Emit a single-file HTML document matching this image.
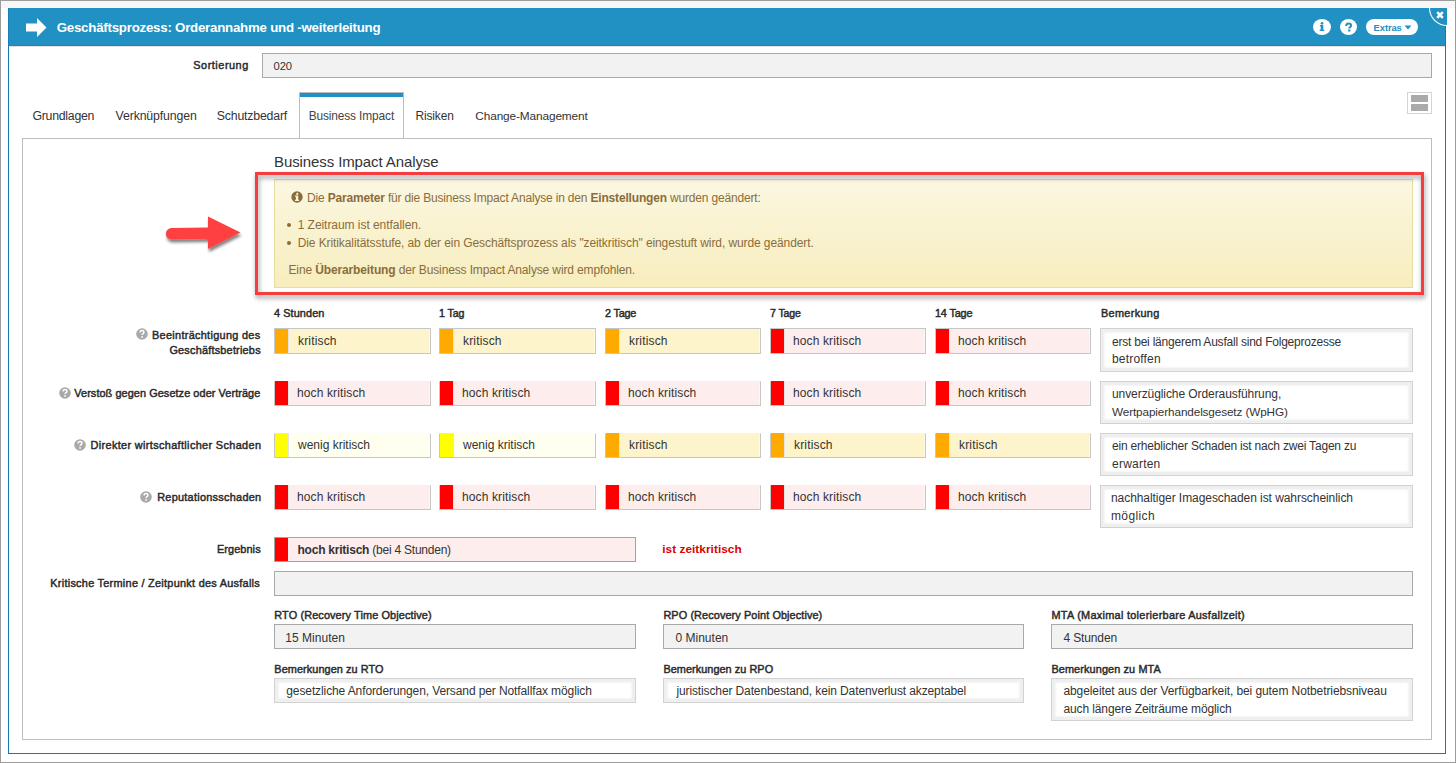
<!DOCTYPE html>
<html><head><meta charset="utf-8"><style>
html,body{margin:0;padding:0;}
body{width:1456px;height:763px;overflow:hidden;position:relative;background:#fff;font-family:"Liberation Sans",sans-serif;}
body>div,body>svg{position:absolute;box-sizing:content-box;}
.t{white-space:nowrap;}
</style></head><body>
<div style="left:0px;top:0px;width:1456px;height:1px;background:#9c9c9c"></div>
<div style="left:0px;top:762px;width:1456px;height:1px;background:#9c9c9c"></div>
<div style="left:0px;top:0px;width:1px;height:763px;background:#9c9c9c"></div>
<div style="left:1455px;top:0px;width:1px;height:763px;background:#9c9c9c"></div>
<div style="left:1px;top:1px;width:1454px;height:7px;background:#f7f7f7"></div>
<div style="left:8px;top:8px;width:1436px;height:744px;border:1px solid #1878ab;background:#fff"></div>
<div style="left:8px;top:8px;width:1438px;height:38px;background:#2190c2"></div>
<div style="left:8px;top:8px;width:1px;height:38px;background:#1a7fb3"></div>
<div style="left:8px;top:45px;width:1438px;height:1px;background:#1c86bb"></div>
<div style="left:9px;top:46px;width:1436px;height:1px;background:#e6e2e0"></div>
<svg style="left:25px;top:17px" width="23" height="21" viewBox="0 0 23 21"><path d="M1 6.5 H12 V1 L21.5 10.5 L12 20 V14.5 H1 Z" fill="#fff"/></svg>
<div class="t" style="left:56.700px;top:21px;font-size:13.3px;line-height:13.3px;font-weight:bold;color:#fff;letter-spacing:-0.240px;">Geschäftsprozess: Orderannahme und -weiterleitung</div>
<div style="left:1313px;top:19px;width:18px;height:16px;background:#fff;border-radius:50%"></div>
<svg style="left:1313px;top:19px" width="18" height="16" viewBox="0 0 18 16"><circle cx="9" cy="4.3" r="1.35" fill="#2190c2"/><path d="M7 6 H10.3 V10.8 H11.3 V12 H6.7 V10.8 H7.7 V7.2 H7 Z" fill="#2190c2"/></svg>
<div style="left:1340px;top:19px;width:17px;height:16px;background:#fff;border-radius:50%"></div>
<svg style="left:1340px;top:19px" width="17" height="16" viewBox="0 0 17 16"><path d="M6.2 7 Q6.0 4.6 8.6 4.6 Q11.1 4.6 11.1 6.6 Q11.1 7.8 9.9 8.4 Q9.3 8.8 9.3 9.6" stroke="#2190c2" stroke-width="2" fill="none"/><rect x="8.1" y="10.5" width="2.3" height="2" fill="#2190c2"/></svg>
<div style="left:1366px;top:19px;width:52px;height:16px;background:#fff;border-radius:8px"></div>
<div class="t" style="left:1373.600px;top:23px;font-size:9.44px;line-height:9.44px;font-weight:bold;color:#2190c2;letter-spacing:-0.120px;">Extras</div>
<svg style="left:1404px;top:25px" width="8" height="5" viewBox="0 0 8 5"><path d="M0.5 0.5 H7.5 L4 4.5 Z" fill="#2190c2"/></svg>
<div style="left:1429px;top:8px;width:17px;height:17px;background:#2190c2;border-left:1px solid #fff;border-bottom:1px solid #fff;border-bottom-left-radius:18px"></div>
<svg style="left:1436px;top:11px" width="8" height="8" viewBox="0 0 8 8"><path d="M1.2 1.2 L6.8 6.8 M6.8 1.2 L1.2 6.8" stroke="#fff" stroke-width="2.6" stroke-linecap="butt"/></svg>
<div style="left:1445px;top:26px;width:1px;height:20px;background:#1878ab"></div>
<div class="t" style="right:1207.228px;text-align:right;top:60px;font-size:10.9px;line-height:10.9px;font-weight:normal;color:#2a2a2a;-webkit-text-stroke:0.45px #2a2a2a;letter-spacing:0.522px;">Sortierung</div>
<div style="left:262px;top:53px;width:1168px;height:23px;background:#f2f2f2;border:1px solid #a9a9a9"></div>
<div class="t" style="left:273.600px;top:61px;font-size:11.24px;line-height:11.24px;font-weight:normal;color:#333;letter-spacing:-0.120px;">020</div>
<div style="left:1407px;top:92px;width:23px;height:20px;border:1px solid #d4d4d4;background:#fff"></div>
<div style="left:1411px;top:95px;width:17px;height:7px;background:#aaa"></div>
<div style="left:1411px;top:104px;width:17px;height:7px;background:#aaa"></div>
<div class="t" style="left:32.400px;top:110px;font-size:12.3px;line-height:12.3px;font-weight:normal;color:#333;letter-spacing:-0.244px;">Grundlagen</div>
<div class="t" style="left:115.600px;top:110px;font-size:12.3px;line-height:12.3px;font-weight:normal;color:#333;letter-spacing:-0.133px;">Verknüpfungen</div>
<div class="t" style="left:216.800px;top:110px;font-size:12.3px;line-height:12.3px;font-weight:normal;color:#333;letter-spacing:-0.182px;">Schutzbedarf</div>
<div style="left:299px;top:92px;width:103px;height:46px;border:1px solid #bdbdbd;border-bottom:none;background:#fff"></div>
<div style="left:300px;top:93px;width:103px;height:4px;background:#2190c2"></div>
<div class="t" style="left:308.633px;top:111px;font-size:11.9px;line-height:11.9px;font-weight:normal;color:#444;letter-spacing:-0.120px;">Business Impact</div>
<div class="t" style="left:415.430px;top:111px;font-size:11.93px;line-height:11.93px;font-weight:normal;color:#333;letter-spacing:-0.120px;">Risiken</div>
<div class="t" style="left:475.300px;top:111px;font-size:11.83px;line-height:11.83px;font-weight:normal;color:#333;letter-spacing:-0.120px;">Change-Management</div>
<div style="left:22px;top:138px;width:1408px;height:600px;border:1px solid #bdbdbd;background:transparent"></div>
<div class="t" style="left:274.000px;top:154px;font-size:15px;line-height:15px;font-weight:normal;color:#333;letter-spacing:-0.100px;">Business Impact Analyse</div>
<div style="left:274px;top:179px;width:1137px;height:107px;border:1px solid #e8dca0;background:linear-gradient(#fbf7e1,#f7edbd)"></div>
<div style="left:255px;top:172px;width:1163px;height:117px;border:3px solid #f73c40;filter:drop-shadow(1px 3px 2.5px rgba(0,0,0,0.42))"></div>
<svg style="left:291px;top:191.2px" width="12" height="12" viewBox="0 0 12 12"><circle cx="6" cy="6" r="5.7" fill="#8a6d3b"/><circle cx="6.3" cy="2.9" r="1.1" fill="#fbf6df"/><path d="M4.1 4.6 H7.2 V8.7 H8.1 V10 H4 V8.7 H4.9 V5.8 H4.1 Z" fill="#fbf6df"/></svg>
<div class="t" style="left:307.000px;top:192px;font-size:12px;line-height:12px;font-weight:normal;color:#8a6d3b;letter-spacing:-0.177px;">Die <b>Parameter</b> für die Business Impact Analyse in den <b>Einstellungen</b> wurden geändert:</div>
<div style="left:287px;top:222.5px;width:4px;height:4px;border-radius:50%;background:#8a6d3b"></div>
<div style="left:287px;top:241px;width:4px;height:4px;border-radius:50%;background:#8a6d3b"></div>
<div class="t" style="left:297.700px;top:219px;font-size:12px;line-height:12px;font-weight:normal;color:#8a6d3b;letter-spacing:-0.050px;">1 Zeitraum ist entfallen.</div>
<div class="t" style="left:297.700px;top:237px;font-size:12px;line-height:12px;font-weight:normal;color:#8a6d3b;letter-spacing:-0.091px;">Die Kritikalitätsstufe, ab der ein Geschäftsprozess als "zeitkritisch" eingestuft wird, wurde geändert.</div>
<div class="t" style="left:288.500px;top:264px;font-size:12px;line-height:12px;font-weight:normal;color:#8a6d3b;letter-spacing:-0.133px;">Eine <b>Überarbeitung</b> der Business Impact Analyse wird empfohlen.</div>
<svg style="left:160px;top:210px" width="90" height="50" viewBox="0 0 90 50"><defs><filter id="sh" x="-20%" y="-20%" width="140%" height="160%"><feGaussianBlur in="SourceAlpha" stdDeviation="1.8"/><feOffset dx="1" dy="3"/><feComponentTransfer><feFuncA type="linear" slope="0.5"/></feComponentTransfer><feMerge><feMergeNode/><feMergeNode in="SourceGraphic"/></feMerge></filter></defs><g filter="url(#sh)"><path d="M11.5 18 L48 17.6 L48 6.5 L80.5 22.6 L48 39 L48 29 L11.5 29.4 A5.5 5.5 0 0 1 11.5 18 Z" fill="#ff4141"/></g></svg>
<div class="t" style="left:274.000px;top:308px;font-size:10.9px;line-height:10.9px;font-weight:normal;color:#2a2a2a;-webkit-text-stroke:0.45px #2a2a2a;letter-spacing:0.088px;">4 Stunden</div>
<div class="t" style="left:439.000px;top:308px;font-size:10.65px;line-height:10.65px;font-weight:normal;color:#2a2a2a;-webkit-text-stroke:0.45px #2a2a2a;letter-spacing:-0.120px;">1 Tag</div>
<div class="t" style="left:605.000px;top:308px;font-size:10.9px;line-height:10.9px;font-weight:normal;color:#2a2a2a;-webkit-text-stroke:0.45px #2a2a2a;letter-spacing:-0.220px;">2 Tage</div>
<div class="t" style="left:770.000px;top:308px;font-size:10.57px;line-height:10.57px;font-weight:normal;color:#2a2a2a;-webkit-text-stroke:0.45px #2a2a2a;letter-spacing:-0.120px;">7 Tage</div>
<div class="t" style="left:935.000px;top:308px;font-size:10.9px;line-height:10.9px;font-weight:normal;color:#2a2a2a;-webkit-text-stroke:0.45px #2a2a2a;letter-spacing:-0.183px;">14 Tage</div>
<div class="t" style="left:1101.000px;top:308px;font-size:10.9px;line-height:10.9px;font-weight:normal;color:#2a2a2a;-webkit-text-stroke:0.45px #2a2a2a;letter-spacing:0.325px;">Bemerkung</div>
<div style="left:274px;top:328px;width:155px;height:24px;border:1px solid #c6c6c6;background:#fdf4cc;box-shadow:inset -1px 0 0 rgba(255,255,255,0.5)"></div>
<div style="left:275px;top:329px;width:13px;height:24px;background:#ffaa00"></div>
<div style="left:288px;top:329px;width:1px;height:24px;background:#e4e4e4"></div>
<div class="t" style="left:298.000px;top:335px;font-size:12px;line-height:12px;font-weight:normal;color:#333;letter-spacing:0.171px;">kritisch</div>
<div style="left:439px;top:328px;width:155px;height:24px;border:1px solid #c6c6c6;background:#fdf4cc;box-shadow:inset -1px 0 0 rgba(255,255,255,0.5)"></div>
<div style="left:440px;top:329px;width:13px;height:24px;background:#ffaa00"></div>
<div style="left:453px;top:329px;width:1px;height:24px;background:#e4e4e4"></div>
<div class="t" style="left:463.000px;top:335px;font-size:12px;line-height:12px;font-weight:normal;color:#333;letter-spacing:0.171px;">kritisch</div>
<div style="left:605px;top:328px;width:154px;height:24px;border:1px solid #c6c6c6;background:#fdf4cc;box-shadow:inset -1px 0 0 rgba(255,255,255,0.5)"></div>
<div style="left:606px;top:329px;width:13px;height:24px;background:#ffaa00"></div>
<div style="left:619px;top:329px;width:1px;height:24px;background:#e4e4e4"></div>
<div class="t" style="left:629.000px;top:335px;font-size:12px;line-height:12px;font-weight:normal;color:#333;letter-spacing:0.171px;">kritisch</div>
<div style="left:770px;top:328px;width:154px;height:24px;border:1px solid #c6c6c6;background:#fdeded;box-shadow:inset -1px 0 0 rgba(255,255,255,0.5)"></div>
<div style="left:771px;top:329px;width:13px;height:24px;background:#ff0000"></div>
<div style="left:784px;top:329px;width:1px;height:24px;background:#e4e4e4"></div>
<div class="t" style="left:793.000px;top:335px;font-size:12px;line-height:12px;font-weight:normal;color:#333;letter-spacing:0.125px;">hoch kritisch</div>
<div style="left:935px;top:328px;width:154px;height:24px;border:1px solid #c6c6c6;background:#fdeded;box-shadow:inset -1px 0 0 rgba(255,255,255,0.5)"></div>
<div style="left:936px;top:329px;width:13px;height:24px;background:#ff0000"></div>
<div style="left:949px;top:329px;width:1px;height:24px;background:#e4e4e4"></div>
<div class="t" style="left:958.000px;top:335px;font-size:12px;line-height:12px;font-weight:normal;color:#333;letter-spacing:0.125px;">hoch kritisch</div>
<div class="t" style="right:1195.567px;text-align:right;top:330px;font-size:10.9px;line-height:10.9px;font-weight:normal;color:#2a2a2a;-webkit-text-stroke:0.45px #2a2a2a;letter-spacing:0.305px;">Beeinträchtigung des</div>
<div class="t" style="right:1195.206px;text-align:right;top:345px;font-size:10.9px;line-height:10.9px;font-weight:normal;color:#2a2a2a;-webkit-text-stroke:0.45px #2a2a2a;letter-spacing:0.213px;">Geschäftsbetriebs</div>
<div style="left:1100px;top:328px;width:311px;height:42px;border:1px solid #d2d2d2;background:#fff;box-shadow:inset 0 0 0 3px #efefef, inset 0 0 2px 4px #f4f4f4"></div>
<div class="t" style="left:1112.000px;top:336px;font-size:12px;line-height:12px;font-weight:normal;color:#333;letter-spacing:-0.223px;">erst bei längerem Ausfall sind Folgeprozesse</div>
<div class="t" style="left:1112.000px;top:353px;font-size:12px;line-height:12px;font-weight:normal;color:#333;letter-spacing:0.175px;">betroffen</div>
<div style="left:274px;top:381px;width:155px;height:23px;border:1px solid #c6c6c6;border-top-color:transparent;background:#fdeded;box-shadow:inset -1px 0 0 rgba(255,255,255,0.5)"></div>
<div style="left:275px;top:381px;width:13px;height:24px;background:#ff0000"></div>
<div style="left:288px;top:381px;width:1px;height:24px;background:#e4e4e4"></div>
<div class="t" style="left:297.000px;top:387px;font-size:12px;line-height:12px;font-weight:normal;color:#333;letter-spacing:0.125px;">hoch kritisch</div>
<div style="left:439px;top:381px;width:155px;height:23px;border:1px solid #c6c6c6;border-top-color:transparent;background:#fdeded;box-shadow:inset -1px 0 0 rgba(255,255,255,0.5)"></div>
<div style="left:440px;top:381px;width:13px;height:24px;background:#ff0000"></div>
<div style="left:453px;top:381px;width:1px;height:24px;background:#e4e4e4"></div>
<div class="t" style="left:462.000px;top:387px;font-size:12px;line-height:12px;font-weight:normal;color:#333;letter-spacing:0.125px;">hoch kritisch</div>
<div style="left:605px;top:381px;width:154px;height:23px;border:1px solid #c6c6c6;border-top-color:transparent;background:#fdeded;box-shadow:inset -1px 0 0 rgba(255,255,255,0.5)"></div>
<div style="left:606px;top:381px;width:13px;height:24px;background:#ff0000"></div>
<div style="left:619px;top:381px;width:1px;height:24px;background:#e4e4e4"></div>
<div class="t" style="left:628.000px;top:387px;font-size:12px;line-height:12px;font-weight:normal;color:#333;letter-spacing:0.125px;">hoch kritisch</div>
<div style="left:770px;top:381px;width:154px;height:23px;border:1px solid #c6c6c6;border-top-color:transparent;background:#fdeded;box-shadow:inset -1px 0 0 rgba(255,255,255,0.5)"></div>
<div style="left:771px;top:381px;width:13px;height:24px;background:#ff0000"></div>
<div style="left:784px;top:381px;width:1px;height:24px;background:#e4e4e4"></div>
<div class="t" style="left:793.000px;top:387px;font-size:12px;line-height:12px;font-weight:normal;color:#333;letter-spacing:0.125px;">hoch kritisch</div>
<div style="left:935px;top:381px;width:154px;height:23px;border:1px solid #c6c6c6;border-top-color:transparent;background:#fdeded;box-shadow:inset -1px 0 0 rgba(255,255,255,0.5)"></div>
<div style="left:936px;top:381px;width:13px;height:24px;background:#ff0000"></div>
<div style="left:949px;top:381px;width:1px;height:24px;background:#e4e4e4"></div>
<div class="t" style="left:958.000px;top:387px;font-size:12px;line-height:12px;font-weight:normal;color:#333;letter-spacing:0.125px;">hoch kritisch</div>
<div class="t" style="right:1195.673px;text-align:right;top:388px;font-size:10.9px;line-height:10.9px;font-weight:normal;color:#2a2a2a;-webkit-text-stroke:0.45px #2a2a2a;letter-spacing:0.074px;">Verstoß gegen Gesetze oder Verträge</div>
<div style="left:1100px;top:381px;width:311px;height:41px;border:1px solid #d2d2d2;background:#fff;box-shadow:inset 0 0 0 3px #efefef, inset 0 0 2px 4px #f4f4f4"></div>
<div class="t" style="left:1112.000px;top:388px;font-size:12px;line-height:12px;font-weight:normal;color:#333;letter-spacing:-0.076px;">unverzügliche Orderausführung,</div>
<div class="t" style="left:1112.000px;top:406px;font-size:11.75px;line-height:11.75px;font-weight:normal;color:#333;letter-spacing:-0.120px;">Wertpapierhandelsgesetz (WpHG)</div>
<div style="left:274px;top:433px;width:155px;height:23px;border:1px solid #c6c6c6;border-top-color:transparent;background:#fffff0;box-shadow:inset -1px 0 0 rgba(255,255,255,0.5)"></div>
<div style="left:275px;top:433px;width:13px;height:24px;background:#ffff00"></div>
<div style="left:288px;top:433px;width:1px;height:24px;background:#e4e4e4"></div>
<div class="t" style="left:298.000px;top:439px;font-size:12px;line-height:12px;font-weight:normal;color:#333;letter-spacing:0.000px;">wenig kritisch</div>
<div style="left:439px;top:433px;width:155px;height:23px;border:1px solid #c6c6c6;border-top-color:transparent;background:#fffff0;box-shadow:inset -1px 0 0 rgba(255,255,255,0.5)"></div>
<div style="left:440px;top:433px;width:13px;height:24px;background:#ffff00"></div>
<div style="left:453px;top:433px;width:1px;height:24px;background:#e4e4e4"></div>
<div class="t" style="left:463.000px;top:439px;font-size:12px;line-height:12px;font-weight:normal;color:#333;letter-spacing:0.000px;">wenig kritisch</div>
<div style="left:605px;top:433px;width:154px;height:23px;border:1px solid #c6c6c6;border-top-color:transparent;background:#fdf4cc;box-shadow:inset -1px 0 0 rgba(255,255,255,0.5)"></div>
<div style="left:606px;top:433px;width:13px;height:24px;background:#ffaa00"></div>
<div style="left:619px;top:433px;width:1px;height:24px;background:#e4e4e4"></div>
<div class="t" style="left:629.000px;top:439px;font-size:12px;line-height:12px;font-weight:normal;color:#333;letter-spacing:0.171px;">kritisch</div>
<div style="left:770px;top:433px;width:154px;height:23px;border:1px solid #c6c6c6;border-top-color:transparent;background:#fdf4cc;box-shadow:inset -1px 0 0 rgba(255,255,255,0.5)"></div>
<div style="left:771px;top:433px;width:13px;height:24px;background:#ffaa00"></div>
<div style="left:784px;top:433px;width:1px;height:24px;background:#e4e4e4"></div>
<div class="t" style="left:794.000px;top:439px;font-size:12px;line-height:12px;font-weight:normal;color:#333;letter-spacing:0.171px;">kritisch</div>
<div style="left:935px;top:433px;width:154px;height:23px;border:1px solid #c6c6c6;border-top-color:transparent;background:#fdf4cc;box-shadow:inset -1px 0 0 rgba(255,255,255,0.5)"></div>
<div style="left:936px;top:433px;width:13px;height:24px;background:#ffaa00"></div>
<div style="left:949px;top:433px;width:1px;height:24px;background:#e4e4e4"></div>
<div class="t" style="left:959.000px;top:439px;font-size:12px;line-height:12px;font-weight:normal;color:#333;letter-spacing:0.171px;">kritisch</div>
<div class="t" style="right:1194.659px;text-align:right;top:440px;font-size:10.9px;line-height:10.9px;font-weight:normal;color:#2a2a2a;-webkit-text-stroke:0.45px #2a2a2a;letter-spacing:0.353px;">Direkter wirtschaftlicher Schaden</div>
<div style="left:1100px;top:433px;width:311px;height:41px;border:1px solid #d2d2d2;background:#fff;box-shadow:inset 0 0 0 3px #efefef, inset 0 0 2px 4px #f4f4f4"></div>
<div class="t" style="left:1112.000px;top:440px;font-size:12px;line-height:12px;font-weight:normal;color:#333;letter-spacing:-0.196px;">ein erheblicher Schaden ist nach zwei Tagen zu</div>
<div class="t" style="left:1112.000px;top:458px;font-size:12px;line-height:12px;font-weight:normal;color:#333;letter-spacing:0.229px;">erwarten</div>
<div style="left:274px;top:485px;width:155px;height:23px;border:1px solid #c6c6c6;border-top-color:transparent;background:#fdeded;box-shadow:inset -1px 0 0 rgba(255,255,255,0.5)"></div>
<div style="left:275px;top:485px;width:13px;height:24px;background:#ff0000"></div>
<div style="left:288px;top:485px;width:1px;height:24px;background:#e4e4e4"></div>
<div class="t" style="left:297.000px;top:491px;font-size:12px;line-height:12px;font-weight:normal;color:#333;letter-spacing:0.125px;">hoch kritisch</div>
<div style="left:439px;top:485px;width:155px;height:23px;border:1px solid #c6c6c6;border-top-color:transparent;background:#fdeded;box-shadow:inset -1px 0 0 rgba(255,255,255,0.5)"></div>
<div style="left:440px;top:485px;width:13px;height:24px;background:#ff0000"></div>
<div style="left:453px;top:485px;width:1px;height:24px;background:#e4e4e4"></div>
<div class="t" style="left:462.000px;top:491px;font-size:12px;line-height:12px;font-weight:normal;color:#333;letter-spacing:0.125px;">hoch kritisch</div>
<div style="left:605px;top:485px;width:154px;height:23px;border:1px solid #c6c6c6;border-top-color:transparent;background:#fdeded;box-shadow:inset -1px 0 0 rgba(255,255,255,0.5)"></div>
<div style="left:606px;top:485px;width:13px;height:24px;background:#ff0000"></div>
<div style="left:619px;top:485px;width:1px;height:24px;background:#e4e4e4"></div>
<div class="t" style="left:628.000px;top:491px;font-size:12px;line-height:12px;font-weight:normal;color:#333;letter-spacing:0.125px;">hoch kritisch</div>
<div style="left:770px;top:485px;width:154px;height:23px;border:1px solid #c6c6c6;border-top-color:transparent;background:#fdeded;box-shadow:inset -1px 0 0 rgba(255,255,255,0.5)"></div>
<div style="left:771px;top:485px;width:13px;height:24px;background:#ff0000"></div>
<div style="left:784px;top:485px;width:1px;height:24px;background:#e4e4e4"></div>
<div class="t" style="left:793.000px;top:491px;font-size:12px;line-height:12px;font-weight:normal;color:#333;letter-spacing:0.125px;">hoch kritisch</div>
<div style="left:935px;top:485px;width:154px;height:23px;border:1px solid #c6c6c6;border-top-color:transparent;background:#fdeded;box-shadow:inset -1px 0 0 rgba(255,255,255,0.5)"></div>
<div style="left:936px;top:485px;width:13px;height:24px;background:#ff0000"></div>
<div style="left:949px;top:485px;width:1px;height:24px;background:#e4e4e4"></div>
<div class="t" style="left:958.000px;top:491px;font-size:12px;line-height:12px;font-weight:normal;color:#333;letter-spacing:0.125px;">hoch kritisch</div>
<div class="t" style="right:1194.617px;text-align:right;top:492px;font-size:10.9px;line-height:10.9px;font-weight:normal;color:#2a2a2a;-webkit-text-stroke:0.45px #2a2a2a;letter-spacing:0.271px;">Reputationsschaden</div>
<div style="left:1100px;top:485px;width:311px;height:41px;border:1px solid #d2d2d2;background:#fff;box-shadow:inset 0 0 0 3px #efefef, inset 0 0 2px 4px #f4f4f4"></div>
<div class="t" style="left:1111.000px;top:492px;font-size:12px;line-height:12px;font-weight:normal;color:#333;letter-spacing:-0.065px;">nachhaltiger Imageschaden ist wahrscheinlich</div>
<div class="t" style="left:1111.000px;top:510px;font-size:12px;line-height:12px;font-weight:normal;color:#333;letter-spacing:0.367px;">möglich</div>
<svg style="left:136px;top:328.3px" width="12" height="12" viewBox="0 0 12 12"><circle cx="6" cy="6" r="5.8" fill="#a9a9a9"/><path d="M4.1 4.6 Q4.1 2.6 6 2.6 Q7.9 2.6 7.9 4.3 Q7.9 5.3 6.9 5.8 Q6.1 6.2 6.1 7.1" stroke="#fff" stroke-width="1.5" fill="none"/><rect x="5.25" y="8.1" width="1.6" height="1.6" fill="#fff"/></svg>
<svg style="left:58.599999999999994px;top:386.5px" width="12" height="12" viewBox="0 0 12 12"><circle cx="6" cy="6" r="5.8" fill="#a9a9a9"/><path d="M4.1 4.6 Q4.1 2.6 6 2.6 Q7.9 2.6 7.9 4.3 Q7.9 5.3 6.9 5.8 Q6.1 6.2 6.1 7.1" stroke="#fff" stroke-width="1.5" fill="none"/><rect x="5.25" y="8.1" width="1.6" height="1.6" fill="#fff"/></svg>
<svg style="left:74px;top:438.5px" width="12" height="12" viewBox="0 0 12 12"><circle cx="6" cy="6" r="5.8" fill="#a9a9a9"/><path d="M4.1 4.6 Q4.1 2.6 6 2.6 Q7.9 2.6 7.9 4.3 Q7.9 5.3 6.9 5.8 Q6.1 6.2 6.1 7.1" stroke="#fff" stroke-width="1.5" fill="none"/><rect x="5.25" y="8.1" width="1.6" height="1.6" fill="#fff"/></svg>
<svg style="left:140.3px;top:490.5px" width="12" height="12" viewBox="0 0 12 12"><circle cx="6" cy="6" r="5.8" fill="#a9a9a9"/><path d="M4.1 4.6 Q4.1 2.6 6 2.6 Q7.9 2.6 7.9 4.3 Q7.9 5.3 6.9 5.8 Q6.1 6.2 6.1 7.1" stroke="#fff" stroke-width="1.5" fill="none"/><rect x="5.25" y="8.1" width="1.6" height="1.6" fill="#fff"/></svg>
<div class="t" style="right:1195.316px;text-align:right;top:544px;font-size:10.9px;line-height:10.9px;font-weight:normal;color:#2a2a2a;-webkit-text-stroke:0.45px #2a2a2a;letter-spacing:0.100px;">Ergebnis</div>
<div style="left:274px;top:537px;width:360px;height:23px;border:1px solid #a3a3a3;background:#fdeded"></div>
<div style="left:275px;top:538px;width:13px;height:23px;background:#ff0000"></div>
<div class="t" style="left:297.500px;top:544px;font-size:12px;line-height:12px;font-weight:normal;color:#333;letter-spacing:-0.232px;"><b>hoch kritisch</b> (bei 4 Stunden)</div>
<div class="t" style="left:662.200px;top:544px;font-size:11.8px;line-height:11.8px;font-weight:bold;color:#dd0000;letter-spacing:0.053px;">ist zeitkritisch</div>
<div class="t" style="right:1195.986px;text-align:right;top:578px;font-size:10.9px;line-height:10.9px;font-weight:normal;color:#2a2a2a;-webkit-text-stroke:0.45px #2a2a2a;letter-spacing:0.271px;">Kritische Termine / Zeitpunkt des Ausfalls</div>
<div style="left:274px;top:571px;width:1137px;height:23px;border:1px solid #a9a9a9;background:#f2f2f2"></div>
<div class="t" style="left:274.300px;top:610px;font-size:10.9px;line-height:10.9px;font-weight:normal;color:#2a2a2a;-webkit-text-stroke:0.45px #2a2a2a;letter-spacing:0.121px;">RTO (Recovery Time Objective)</div>
<div style="left:274px;top:624px;width:360px;height:23px;border:1px solid #a9a9a9;background:#f2f2f2"></div>
<div class="t" style="left:285.300px;top:632px;font-size:12px;line-height:12px;font-weight:normal;color:#333;letter-spacing:0.022px;">15 Minuten</div>
<div class="t" style="left:274.300px;top:664px;font-size:10.9px;line-height:10.9px;font-weight:normal;color:#2a2a2a;-webkit-text-stroke:0.45px #2a2a2a;letter-spacing:0.076px;">Bemerkungen zu RTO</div>
<div style="left:274px;top:678px;width:360px;height:23px;border:1px solid #d2d2d2;background:#fff;box-shadow:inset 0 0 0 3px #efefef, inset 0 0 2px 4px #f4f4f4"></div>
<div class="t" style="left:286.300px;top:685px;font-size:12px;line-height:12px;font-weight:normal;color:#333;letter-spacing:-0.107px;">gesetzliche Anforderungen, Versand per Notfallfax möglich</div>
<div class="t" style="left:663.400px;top:610px;font-size:10.9px;line-height:10.9px;font-weight:normal;color:#2a2a2a;-webkit-text-stroke:0.45px #2a2a2a;letter-spacing:0.093px;">RPO (Recovery Point Objective)</div>
<div style="left:663px;top:624px;width:359px;height:23px;border:1px solid #a9a9a9;background:#f2f2f2"></div>
<div class="t" style="left:675.400px;top:632px;font-size:12px;line-height:12px;font-weight:normal;color:#333;letter-spacing:0.025px;">0 Minuten</div>
<div class="t" style="left:663.400px;top:664px;font-size:10.9px;line-height:10.9px;font-weight:normal;color:#2a2a2a;-webkit-text-stroke:0.45px #2a2a2a;letter-spacing:0.047px;">Bemerkungen zu RPO</div>
<div style="left:663px;top:678px;width:359px;height:23px;border:1px solid #d2d2d2;background:#fff;box-shadow:inset 0 0 0 3px #efefef, inset 0 0 2px 4px #f4f4f4"></div>
<div class="t" style="left:676.400px;top:685px;font-size:12px;line-height:12px;font-weight:normal;color:#333;letter-spacing:-0.117px;">juristischer Datenbestand, kein Datenverlust akzeptabel</div>
<div class="t" style="left:1051.400px;top:610px;font-size:10.9px;line-height:10.9px;font-weight:normal;color:#2a2a2a;-webkit-text-stroke:0.45px #2a2a2a;letter-spacing:0.289px;">MTA (Maximal tolerierbare Ausfallzeit)</div>
<div style="left:1051px;top:624px;width:360px;height:23px;border:1px solid #a9a9a9;background:#f2f2f2"></div>
<div class="t" style="left:1063.400px;top:632px;font-size:12px;line-height:12px;font-weight:normal;color:#333;letter-spacing:-0.125px;">4 Stunden</div>
<div class="t" style="left:1051.400px;top:664px;font-size:10.9px;line-height:10.9px;font-weight:normal;color:#2a2a2a;-webkit-text-stroke:0.45px #2a2a2a;letter-spacing:0.112px;">Bemerkungen zu MTA</div>
<div style="left:1051px;top:678px;width:360px;height:41px;border:1px solid #d2d2d2;background:#fff;box-shadow:inset 0 0 0 3px #efefef, inset 0 0 2px 4px #f4f4f4"></div>
<div class="t" style="left:1063.400px;top:685px;font-size:12px;line-height:12px;font-weight:normal;color:#333;letter-spacing:-0.090px;">abgeleitet aus der Verfügbarkeit, bei gutem Notbetriebsniveau</div>
<div class="t" style="left:1063.400px;top:703px;font-size:12px;line-height:12px;font-weight:normal;color:#333;letter-spacing:-0.107px;">auch längere Zeiträume möglich</div>
</body></html>
